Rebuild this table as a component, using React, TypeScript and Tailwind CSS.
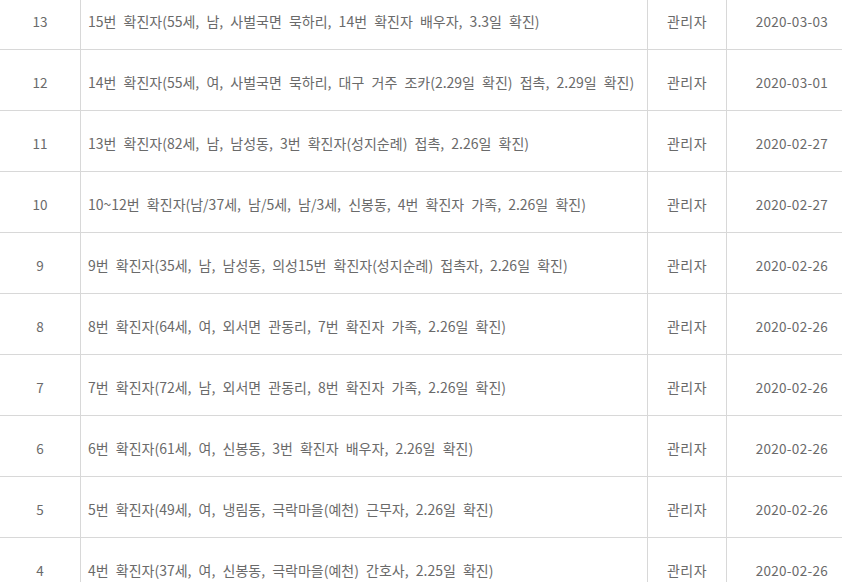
const rows = [
  { no: 13, title: "15번 확진자(55세, 남, 사벌국면 묵하리, 14번 확진자 배우자, 3.3일 확진)", date: "2020-03-03" },
  { no: 12, title: "14번 확진자(55세, 여, 사벌국면 묵하리, 대구 거주 조카(2.29일 확진) 접촉, 2.29일 확진)", date: "2020-03-01" },
  { no: 11, title: "13번 확진자(82세, 남, 남성동, 3번 확진자(성지순례) 접촉, 2.26일 확진)", date: "2020-02-27" },
  { no: 10, title: "10~12번 확진자(남/37세, 남/5세, 남/3세, 신봉동, 4번 확진자 가족, 2.26일 확진)", date: "2020-02-27" },
  { no: 9, title: "9번 확진자(35세, 남, 남성동, 의성15번 확진자(성지순례) 접촉자, 2.26일 확진)", date: "2020-02-26" },
  { no: 8, title: "8번 확진자(64세, 여, 외서면 관동리, 7번 확진자 가족, 2.26일 확진)", date: "2020-02-26" },
  { no: 7, title: "7번 확진자(72세, 남, 외서면 관동리, 8번 확진자 가족, 2.26일 확진)", date: "2020-02-26" },
  { no: 6, title: "6번 확진자(61세, 여, 신봉동, 3번 확진자 배우자, 2.26일 확진)", date: "2020-02-26" },
  { no: 5, title: "5번 확진자(49세, 여, 냉림동, 극락마을(예천) 근무자, 2.26일 확진)", date: "2020-02-26" },
  { no: 4, title: "4번 확진자(37세, 여, 신봉동, 극락마을(예천) 간호사, 2.25일 확진)", date: "2020-02-26" },
];

export default function App() {
  return (
    <div className="h-[582px] w-[842px] overflow-hidden bg-white">
      <div className="-mt-[11px] text-[14px] text-[#6a6a6a] [word-spacing:4px] font-['Noto_Sans_CJK_KR','Noto_Sans',sans-serif]">
        {rows.map((r) => (
          <div key={r.no} className="grid h-[61px] grid-cols-[80px_1px_566px_1px_78px_1px_115px] border-b border-[#d8d8d8]">
            <div className="flex items-center justify-center pt-[5px] text-[13.5px]">{r.no}</div>
            <div className="bg-[#d8d8d8]" />
            <div className="flex items-center whitespace-nowrap pl-[7px] pt-[5px]">{r.title}</div>
            <div className="bg-[#d8d8d8]" />
            <div className="flex items-center justify-center pt-[5px] tracking-[0.5px]">관리자</div>
            <div className="bg-[#d8d8d8]" />
            <div className="flex items-center justify-end pr-[14px] pt-[5px] text-[13.5px] tracking-[0.3px]">{r.date}</div>
          </div>
        ))}
      </div>
    </div>
  );
}
